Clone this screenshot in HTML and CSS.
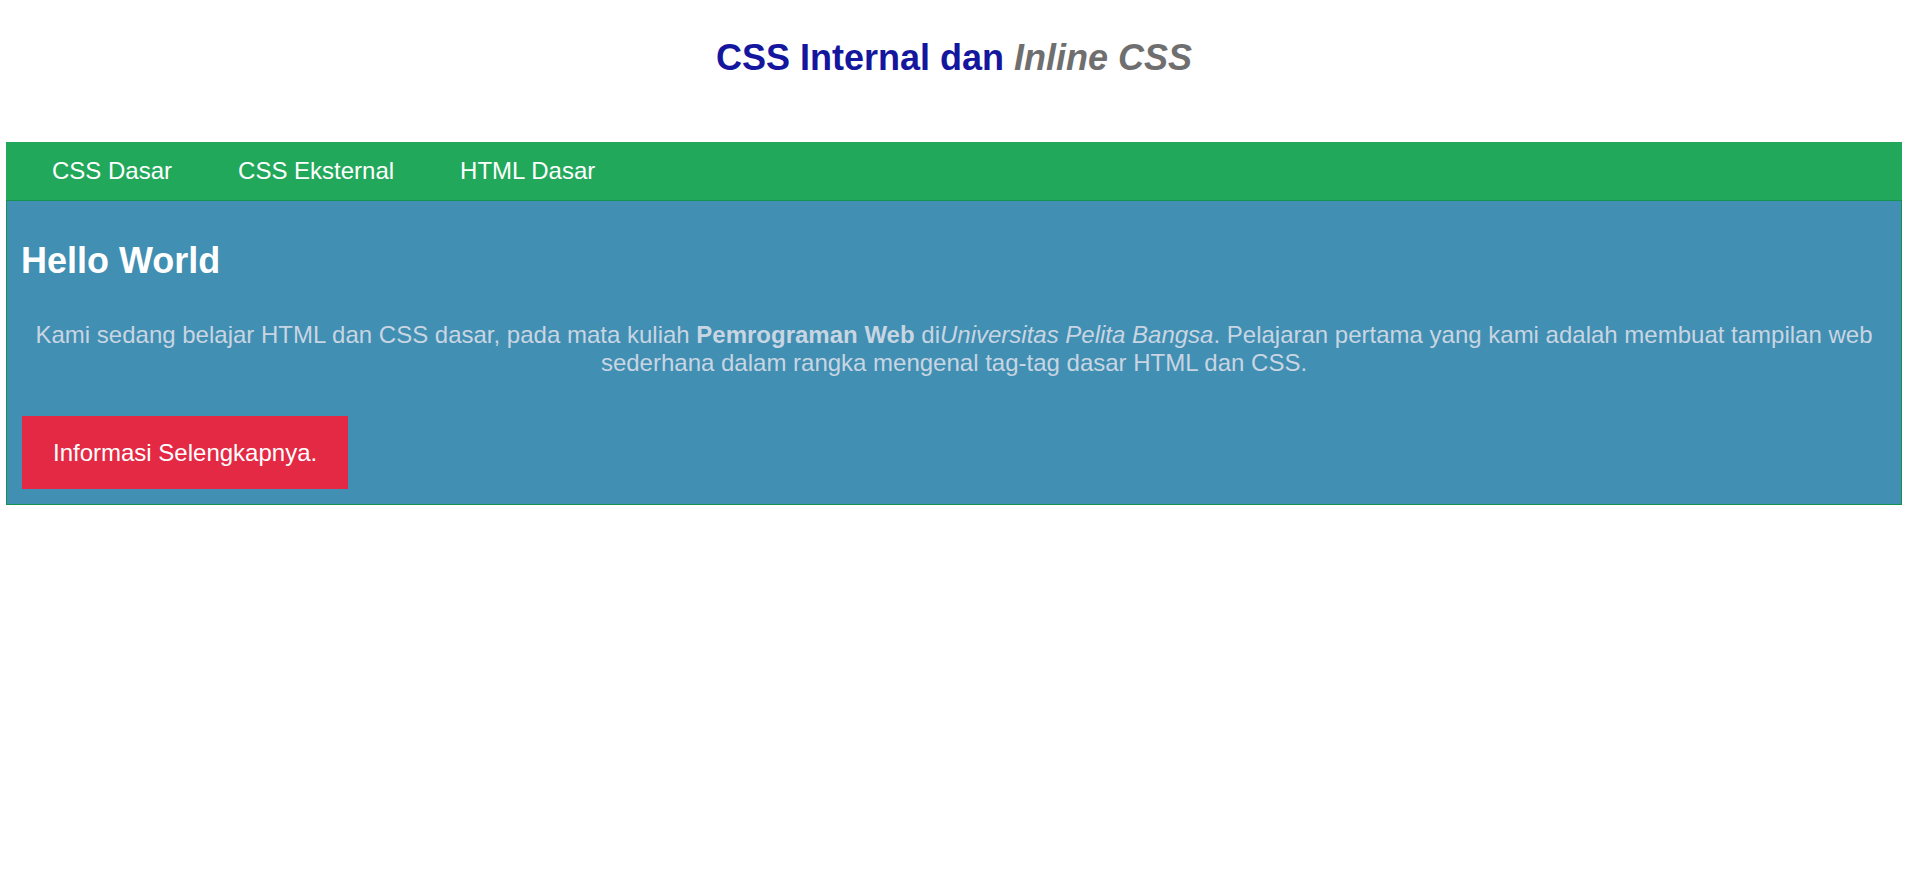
FILE: index.html
```html
<!DOCTYPE html>
<html lang="id">
<head>
<meta charset="utf-8">
<title>CSS Internal dan Inline CSS</title>
<link rel="stylesheet" href="styles.css">
</head>
<body>
<h1 class="title">CSS Internal dan <span class="title-alt">Inline CSS</span></h1>
<nav class="menu">
  <a class="menu-link" href="#">CSS Dasar</a>
  <a class="menu-link" href="#">CSS Eksternal</a>
  <a class="menu-link" href="#">HTML Dasar</a>
</nav>
<section class="hero">
  <h2 class="hero-title">Hello World</h2>
  <p class="hero-text">Kami sedang belajar HTML dan CSS dasar, pada mata kuliah <b>Pemrograman Web</b> di<i>Universitas Pelita Bangsa</i>. Pelajaran pertama yang kami adalah membuat tampilan web sederhana dalam rangka mengenal tag-tag dasar HTML dan CSS.</p>
  <a class="hero-button" href="#">Informasi Selengkapnya.</a>
</section>
</body>
</html>
```
FILE: styles.css
```css
html, body {
  background: #ffffff;
}
body {
  margin: 0 8px 0 6px;
  font-family: "Liberation Sans", Arial, sans-serif;
}
.title {
  margin: 0 0 64px;
  padding-top: 38px;
  font-size: 36px;
  line-height: 40px;
  font-weight: bold;
  text-align: center;
  color: #14169e;
}
.title-alt {
  font-style: italic;
  font-weight: bold;
  color: #6f6f6f;
}
.menu {
  display: flex;
  padding-left: 13px;
  background: #21a85a;
}
.menu-link {
  padding: 15px 33px;
  font-size: 24px;
  line-height: 28px;
  color: #ffffff;
  text-decoration: none;
}
.hero {
  border: 1px solid #14934c;
  background: #418fb2;
  padding: 0 15px 15px 15px;
}
.hero-title {
  margin: 40px 0 40px -1px;
  font-size: 36px;
  line-height: 40px;
  font-weight: bold;
  color: #ffffff;
}
.hero-text {
  margin: 0 0 39px;
  font-size: 24px;
  text-align: center;
  color: #c8d5e2;
}
.hero-button {
  display: inline-block;
  padding: 23px 31px;
  font-size: 24px;
  line-height: 27px;
  background: #e32944;
  color: #ffffff;
  text-decoration: none;
}
```
